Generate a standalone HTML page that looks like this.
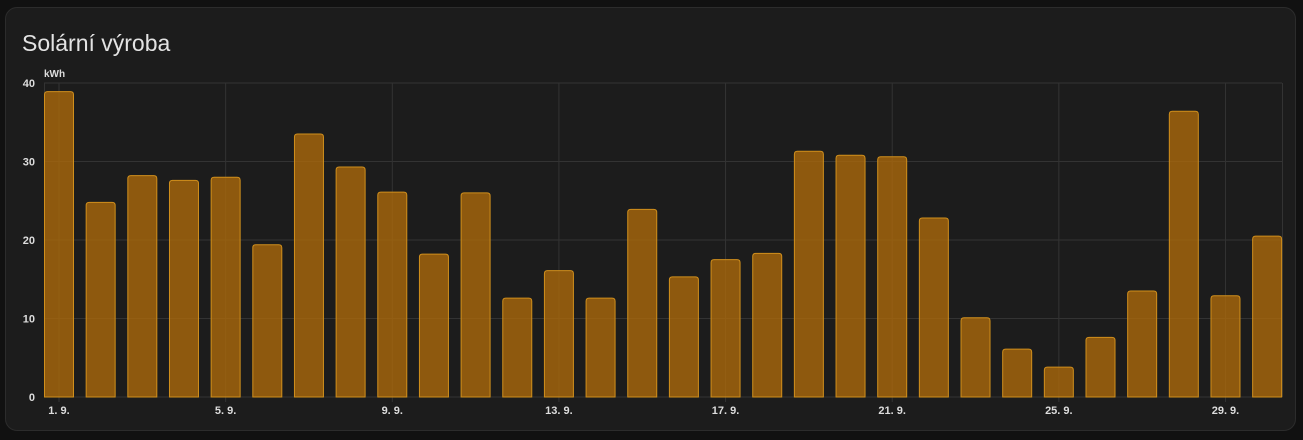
<!DOCTYPE html>
<html><head><meta charset="utf-8"><style>
html,body{margin:0;padding:0;background:#111111;width:1303px;height:440px;overflow:hidden;font-family:"Liberation Sans",sans-serif}
.card{position:absolute;left:5px;top:7px;width:1291px;height:424px;background:#1c1c1c;border:1px solid #2c2c2c;border-radius:12px;box-sizing:border-box}
.t{position:absolute;left:22px;top:30px;font-size:23px;color:#e3e3e3}
</style></head><body>
<div class="card"></div>
<div class="t">Solární výroba</div>
<svg width="1303" height="440" style="position:absolute;left:0;top:0" font-family="Liberation Sans, sans-serif">
<g id="g"></g>
</svg>
<script>
var v=[38.9,24.8,28.2,27.6,28.0,19.4,33.5,29.3,26.1,18.2,26.0,12.6,16.1,12.6,23.9,15.3,17.5,18.3,31.3,30.8,30.6,22.8,10.1,6.1,3.8,7.6,13.5,36.4,12.9,20.5];
var s='',y0=397,k=7.85;
for(var i=0;i<5;i++){var y=y0-i*78.5;s+='<line x1="44" x2="1282" y1="'+y+'" y2="'+y+'" stroke="#333" stroke-width="1"/>';
s+='<text x="35" y="'+(y+4)+'" fill="#ddd" font-size="11" font-weight="bold" text-anchor="end">'+(i*10)+'</text>';}
s+='<line x1="44.5" x2="44.5" y1="83" y2="397" stroke="#333"/><line x1="1282.5" x2="1282.5" y1="83" y2="397" stroke="#333"/>';
for(var d=0;d<30;d+=4){var x=59+d*41.66;s+='<line x1="'+x+'" x2="'+x+'" y1="83" y2="402" stroke="#333"/>';
s+='<text x="'+x+'" y="414" fill="#ddd" font-size="11" font-weight="bold" text-anchor="middle">'+(d+1)+'. 9.</text>';}
s+='<text x="44" y="77" fill="#ddd" font-size="10" font-weight="bold">kWh</text>';
for(var i=0;i<30;i++){var c=59+i*41.66,h=v[i]*k;s+='<path d="M'+(c-14.5)+' '+y0+'V'+(y0-h+3)+'q0-3 3-3h23q3 0 3 3V'+y0+'Z" fill="rgba(180,110,10,0.75)" stroke="#d08f1c" stroke-width="1"/>';}
document.getElementById('g').innerHTML=s;
</script>
</body></html>
